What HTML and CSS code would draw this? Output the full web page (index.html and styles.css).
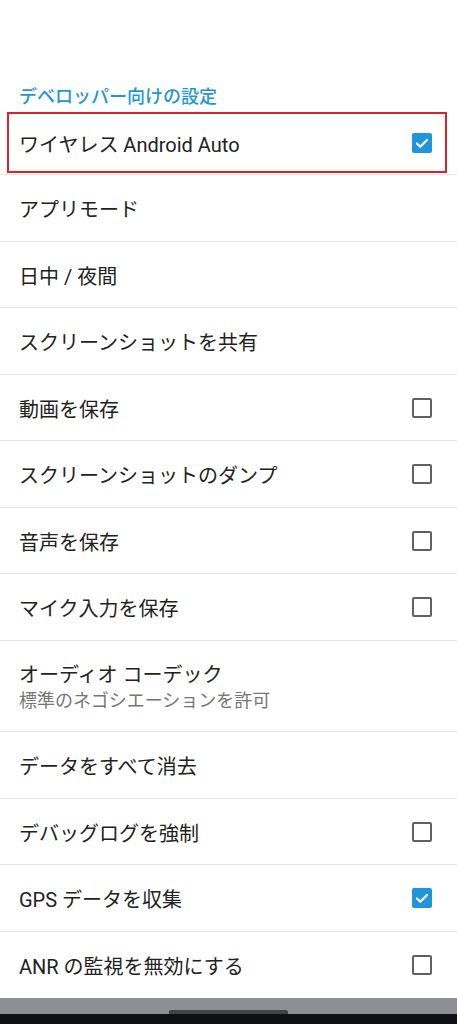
FILE: index.html
```html
<!DOCTYPE html>
<html lang="ja">
<head>
    <meta charset="UTF-8">
    <meta name="viewport" content="width=device-width, initial-scale=1.0">
    <title>デベロッパー向けの設定</title>
    <link rel="stylesheet" href="styles.css">
</head>
<body>
    <main class="settings">
        <h2 class="section-title">デベロッパー向けの設定</h2>

        <!-- 一覧 -->
        <div class="row marked">
            <div class="mark">
                <span class="label">ワイヤレス Android Auto</span>
                <span class="check on"><svg viewBox="0 0 20 20"><path d="M5 10.5l3.3 3.2L15 7" /></svg></span>
            </div>
        </div>
        <div class="row"><span class="label">アプリモード</span></div>
        <div class="row"><span class="label">日中 / 夜間</span></div>
        <div class="row"><span class="label">スクリーンショットを共有</span></div>
        <div class="row"><span class="label">動画を保存</span><span class="check"></span></div>
        <div class="row"><span class="label">スクリーンショットのダンプ</span><span class="check"></span></div>
        <div class="row"><span class="label">音声を保存</span><span class="check"></span></div>
        <div class="row"><span class="label">マイク入力を保存</span><span class="check"></span></div>
        <div class="row tall">
            <div class="text">
                <span class="label">オーディオ コーデック</span>
                <span class="sub">標準のネゴシエーションを許可</span>
            </div>
        </div>
        <div class="row"><span class="label">データをすべて消去</span></div>
        <div class="row"><span class="label">デバッグログを強制</span><span class="check"></span></div>
        <div class="row">
            <span class="label">GPS データを収集</span>
            <span class="check on"><svg viewBox="0 0 20 20"><path d="M5 10.5l3.3 3.2L15 7" /></svg></span>
        </div>
        <div class="row last"><span class="label">ANR の監視を無効にする</span><span class="check"></span></div>
    </main>

    <div class="navbar"><div class="handle"></div></div>
    <div class="navbase"></div>
</body>
</html>
```

FILE: styles.css
```css
/* 全体 */
body {
    margin: 0;
    padding: 0;
    background: #fff;
    font-family: Roboto, "Noto Sans CJK JP", sans-serif;
    color: #222;
    height: 1024px;
    overflow: hidden;
}

.settings {
    background: #fff;
}

.section-title {
    margin: 0;
    height: 108.5px;
    display: flex;
    align-items: flex-end;
    padding: 0 19px 0.5px;
    box-sizing: border-box;
    font-size: 18px;
    font-weight: 500;
    line-height: 22px;
    color: #1f96d8;
}

/* 行 */
.row {
    height: 66.5px;
    box-sizing: border-box;
    border-bottom: 1.5px solid #e6e6e6;
    display: flex;
    align-items: center;
    justify-content: space-between;
    padding: 0 25px 0 19px;
}

.row.last {
    border-bottom: none;
}

.row.tall {
    height: 91.5px;
}

.row.marked {
    padding: 3.5px 10px 1px 7px;
    align-items: stretch;
}

.mark {
    flex: 1;
    border: 2px solid #d9222a;
    display: flex;
    align-items: center;
    justify-content: space-between;
    padding: 0 13px 0 10px;
}

.label {
    font-size: 20px;
    line-height: 26px;
    padding-top: 5px;
}

.text {
    display: flex;
    flex-direction: column;
    gap: 2px;
}

.text .label {
    padding-top: 3px;
}

.sub {
    font-size: 18px;
    line-height: 22px;
    color: #757575;
}

/* チェックボックス */
.check {
    width: 20px;
    height: 20px;
    box-sizing: border-box;
    border: 2px solid #616161;
    border-radius: 2px;
    display: block;
    margin-top: 1px;
}

.check.on {
    border: none;
    background: #1f96dc;
}

.check svg {
    width: 20px;
    height: 20px;
    display: block;
}

.check svg path {
    fill: none;
    stroke: #fff;
    stroke-width: 2.2;
    stroke-linecap: round;
    stroke-linejoin: round;
}

/* ナビゲーション */
.navbar {
    height: 15.5px;
    background: #8e8f93;
    display: flex;
    align-items: flex-end;
    justify-content: center;
}

.handle {
    width: 119px;
    height: 4px;
    border-radius: 2px 2px 0 0;
    background: #414245;
    margin-left: -0.5px;
}

.navbase {
    height: 11px;
    background: #0f1014;
}
```
